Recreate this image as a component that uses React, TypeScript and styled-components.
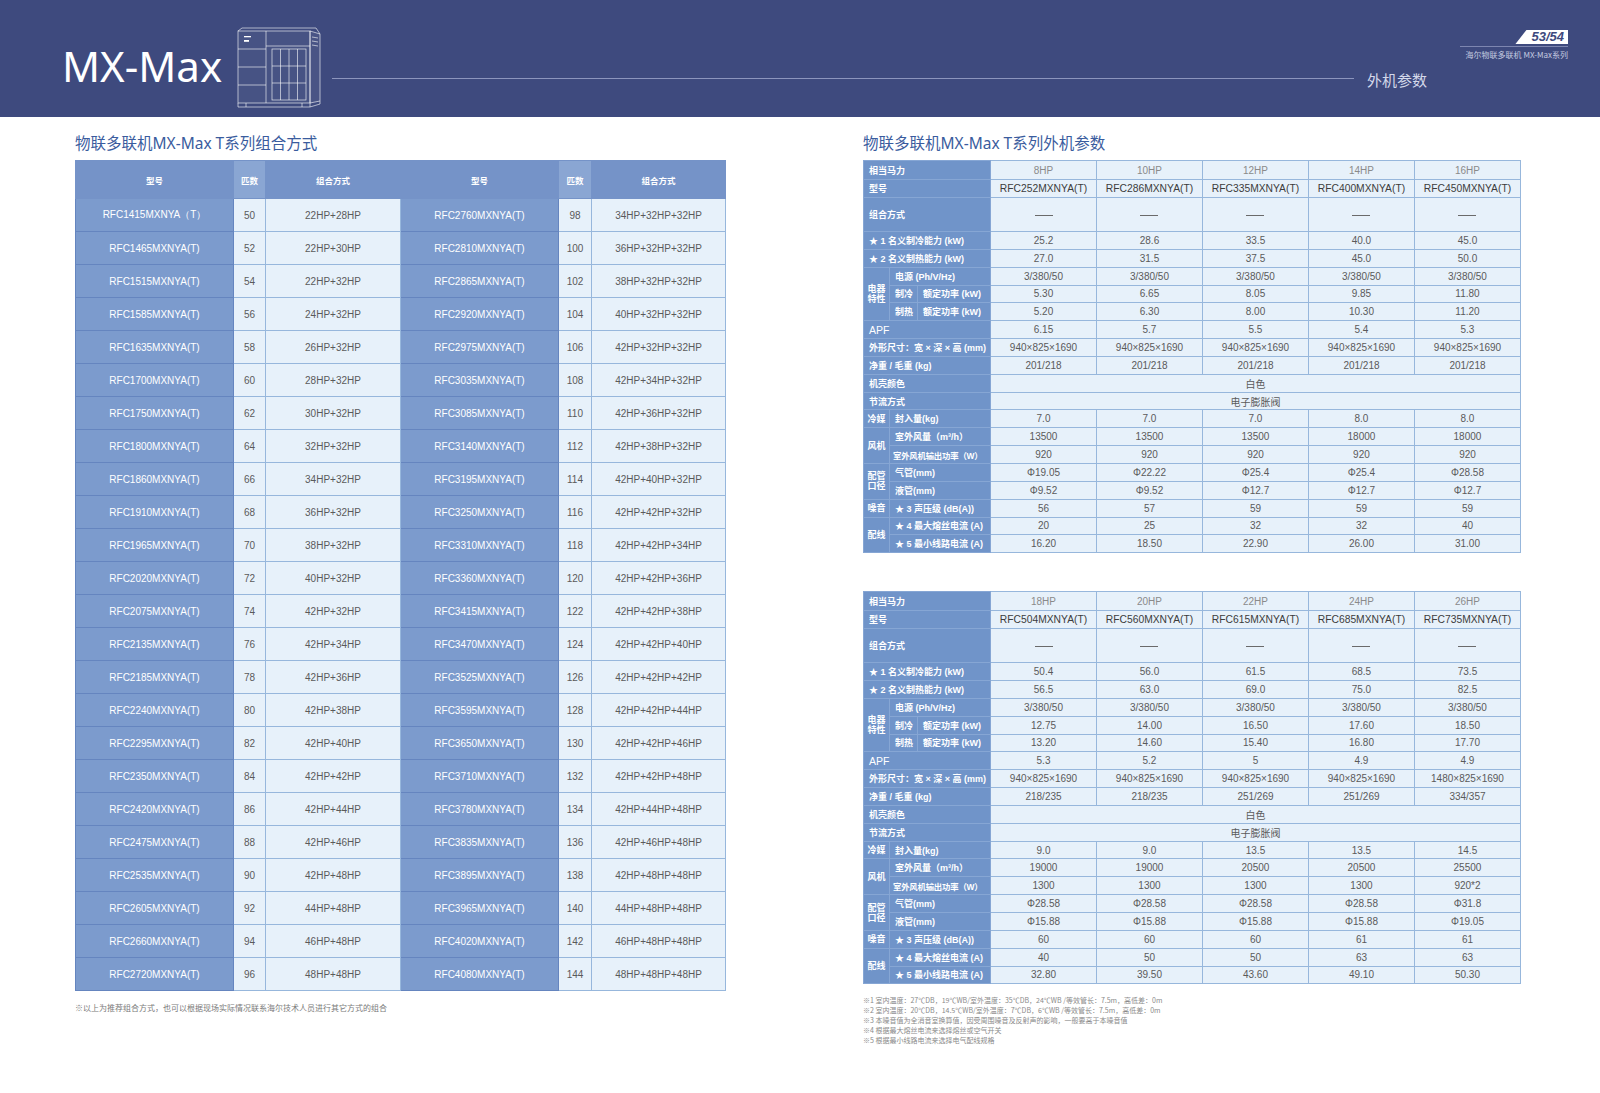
import React from "react";
import styled, { createGlobalStyle } from "styled-components";

const NAVY = "#3e4a7e";
const TITLE_BLUE = "#3a5c9e";
const LABEL_BLUE = "#7094c9";
const CELL_BG = "#e7f1fa";
const CELL_LINE = "#97b7dc";
const TEXT_GRAY = "#5a5a5a";

const GlobalStyle = createGlobalStyle`
  html, body {
    margin: 0;
    padding: 0;
    background: #fff;
  }
  body {
    font-family: "Liberation Sans", "Noto Sans CJK SC", sans-serif;
  }
`;

const Page = styled.div`
  width: 1600px;
  height: 1093px;
  background: #fff;
  overflow: hidden;
  display: flex;
  flex-direction: column;
`;

const Header = styled.header`
  height: 117px;
  flex-shrink: 0;
  box-sizing: border-box;
  background: ${NAVY};
  display: flex;
  align-items: flex-start;
  padding: 0 32px 0 62px;
`;

const Brand = styled.h1`
  margin: 44px 0 0;
  font-family: "Noto Sans", sans-serif;
  font-weight: 400;
  font-size: 42px;
  line-height: 44px;
  color: #fff;
  white-space: nowrap;
`;

const UnitPicture = styled.svg`
  flex-shrink: 0;
  margin: 27px 0 0 14px;
`;

const HeaderRule = styled.div`
  flex: 1;
  height: 1px;
  margin: 78px 0 0 10px;
  background: #8c95bd;
`;

const SectionLabel = styled.div`
  margin: 70px 0 0 13px;
  font-family: "Noto Sans CJK SC", sans-serif;
  font-size: 15px;
  line-height: 20px;
  color: #d3d8ea;
  white-space: nowrap;
`;

const Folio = styled.div`
  width: 108px;
  margin: 30px 0 0 33px;
  display: flex;
  flex-direction: column;
  align-items: flex-end;
`;

const FolioBadge = styled.div`
  height: 14px;
  line-height: 14px;
  padding: 0 4px 0 16px;
  background: #fff;
  color: ${NAVY};
  font-family: "Liberation Sans", sans-serif;
  font-weight: bold;
  font-style: italic;
  font-size: 13px;
  clip-path: polygon(11px 0, 100% 0, 100% 100%, 0 100%);
`;

const FolioRule = styled.div`
  align-self: stretch;
  height: 1px;
  margin-top: 2px;
  background: #7d86b0;
`;

const FolioCaption = styled.div`
  margin-top: 3px;
  font-family: "Noto Sans CJK SC", sans-serif;
  font-size: 8px;
  line-height: 10px;
  color: #c5cae0;
  white-space: nowrap;
`;

const Content = styled.main`
  display: flex;
  gap: 138px;
  padding: 16px 0 0 75px;
`;

const Column = styled.section<{ $width: number }>`
  width: ${(p) => p.$width}px;
  display: flex;
  flex-direction: column;
`;

const SectionTitle = styled.h2`
  margin: 0 0 7px;
  font-family: "Noto Sans", "Noto Sans CJK SC", sans-serif;
  font-weight: 400;
  font-size: 15.5px;
  line-height: 20px;
  color: ${TITLE_BLUE};
  white-space: nowrap;
`;

/* ---------- combination table ---------- */

const ComboTable = styled.table`
  width: 650px;
  border-collapse: collapse;
  table-layout: fixed;
  font-family: "Liberation Sans", sans-serif;
`;

const ComboHead = styled.th<{ $light?: boolean }>`
  height: 37px;
  padding: 0;
  background: ${(p) => (p.$light ? "#8aa6d3" : "#7593c8")};
  border: 1px solid #7593c8;
  color: #fff;
  font-family: "Noto Sans CJK SC", sans-serif;
  font-size: 8.5px;
  font-weight: bold;
`;

const ComboRow = styled.tr`
  height: 33px;
`;

const ModelCell = styled.td`
  padding: 0;
  background: #7c9bcd;
  border: 1px solid #6585bf;
  color: #fff;
  font-size: 10px;
  text-align: center;
`;

const ComboCell = styled.td`
  padding: 0;
  background: ${CELL_BG};
  border: 1px solid ${CELL_LINE};
  color: ${TEXT_GRAY};
  font-size: 10px;
  text-align: center;
`;

const Note = styled.p`
  margin: 11px 0 0;
  font-family: "Noto Sans CJK SC", sans-serif;
  font-size: 8px;
  line-height: 11px;
  color: #7a7a7a;
  white-space: nowrap;
`;

/* ---------- spec table ---------- */

const SpecTable = styled.table<{ $gap?: number }>`
  width: 658px;
  margin-top: ${(p) => p.$gap || 0}px;
  border-collapse: collapse;
  table-layout: fixed;
  border: 1px solid ${LABEL_BLUE};
  font-family: "Liberation Sans", "Noto Sans CJK SC", sans-serif;
`;

const SpecRow = styled.tr<{ $h?: number }>`
  height: ${(p) => p.$h || 17.85}px;
`;

const Label = styled.td<{ $big?: boolean; $tight?: boolean }>`
  padding: 0 0 0 ${(p) => (p.$tight ? 3 : 5)}px;
  background: ${LABEL_BLUE};
  border: 1px solid #86a6d4;
  color: #fff;
  font-size: ${(p) => (p.$big ? "10.5px" : p.$tight ? "8.4px" : "9px")};
  font-weight: ${(p) => (p.$big ? 400 : 700)};
  letter-spacing: ${(p) => (p.$tight ? "-0.2px" : "0")};
  white-space: nowrap;
  overflow: hidden;
`;

const Group = styled.td`
  padding: 0;
  background: ${LABEL_BLUE};
  border: 1px solid #86a6d4;
  color: #fff;
  font-size: 9px;
  font-weight: 700;
  line-height: 10px;
  text-align: center;
  word-break: break-all;
`;

const Value = styled.td<{ $tone?: "muted" | "strong" }>`
  padding: 0;
  background: ${CELL_BG};
  border: 1px solid ${CELL_LINE};
  color: ${(p) => (p.$tone === "muted" ? "#8a8a8a" : p.$tone === "strong" ? "#3c3c3c" : TEXT_GRAY)};
  font-size: ${(p) => (p.$tone === "strong" ? "10.3px" : "10px")};
  text-align: center;
  white-space: nowrap;
`;

const Dash = styled.span`
  display: inline-block;
  width: 18px;
  height: 1px;
  background: #6a6a6a;
  vertical-align: middle;
`;

const FootNotes = styled.div`
  margin-top: 11px;
  font-family: "Noto Sans CJK SC", sans-serif;
  font-size: 7px;
  line-height: 10px;
  color: #8a8a8a;
  white-space: nowrap;
`;

/* ---------- data ---------- */

const combos: [string, string, string][] = [
  ["RFC1415MXNYA（T）", "50", "22HP+28HP"],
  ["RFC1465MXNYA(T)", "52", "22HP+30HP"],
  ["RFC1515MXNYA(T)", "54", "22HP+32HP"],
  ["RFC1585MXNYA(T)", "56", "24HP+32HP"],
  ["RFC1635MXNYA(T)", "58", "26HP+32HP"],
  ["RFC1700MXNYA(T)", "60", "28HP+32HP"],
  ["RFC1750MXNYA(T)", "62", "30HP+32HP"],
  ["RFC1800MXNYA(T)", "64", "32HP+32HP"],
  ["RFC1860MXNYA(T)", "66", "34HP+32HP"],
  ["RFC1910MXNYA(T)", "68", "36HP+32HP"],
  ["RFC1965MXNYA(T)", "70", "38HP+32HP"],
  ["RFC2020MXNYA(T)", "72", "40HP+32HP"],
  ["RFC2075MXNYA(T)", "74", "42HP+32HP"],
  ["RFC2135MXNYA(T)", "76", "42HP+34HP"],
  ["RFC2185MXNYA(T)", "78", "42HP+36HP"],
  ["RFC2240MXNYA(T)", "80", "42HP+38HP"],
  ["RFC2295MXNYA(T)", "82", "42HP+40HP"],
  ["RFC2350MXNYA(T)", "84", "42HP+42HP"],
  ["RFC2420MXNYA(T)", "86", "42HP+44HP"],
  ["RFC2475MXNYA(T)", "88", "42HP+46HP"],
  ["RFC2535MXNYA(T)", "90", "42HP+48HP"],
  ["RFC2605MXNYA(T)", "92", "44HP+48HP"],
  ["RFC2660MXNYA(T)", "94", "46HP+48HP"],
  ["RFC2720MXNYA(T)", "96", "48HP+48HP"],
];

const combos3: [string, string, string][] = [
  ["RFC2760MXNYA(T)", "98", "34HP+32HP+32HP"],
  ["RFC2810MXNYA(T)", "100", "36HP+32HP+32HP"],
  ["RFC2865MXNYA(T)", "102", "38HP+32HP+32HP"],
  ["RFC2920MXNYA(T)", "104", "40HP+32HP+32HP"],
  ["RFC2975MXNYA(T)", "106", "42HP+32HP+32HP"],
  ["RFC3035MXNYA(T)", "108", "42HP+34HP+32HP"],
  ["RFC3085MXNYA(T)", "110", "42HP+36HP+32HP"],
  ["RFC3140MXNYA(T)", "112", "42HP+38HP+32HP"],
  ["RFC3195MXNYA(T)", "114", "42HP+40HP+32HP"],
  ["RFC3250MXNYA(T)", "116", "42HP+42HP+32HP"],
  ["RFC3310MXNYA(T)", "118", "42HP+42HP+34HP"],
  ["RFC3360MXNYA(T)", "120", "42HP+42HP+36HP"],
  ["RFC3415MXNYA(T)", "122", "42HP+42HP+38HP"],
  ["RFC3470MXNYA(T)", "124", "42HP+42HP+40HP"],
  ["RFC3525MXNYA(T)", "126", "42HP+42HP+42HP"],
  ["RFC3595MXNYA(T)", "128", "42HP+42HP+44HP"],
  ["RFC3650MXNYA(T)", "130", "42HP+42HP+46HP"],
  ["RFC3710MXNYA(T)", "132", "42HP+42HP+48HP"],
  ["RFC3780MXNYA(T)", "134", "42HP+44HP+48HP"],
  ["RFC3835MXNYA(T)", "136", "42HP+46HP+48HP"],
  ["RFC3895MXNYA(T)", "138", "42HP+48HP+48HP"],
  ["RFC3965MXNYA(T)", "140", "44HP+48HP+48HP"],
  ["RFC4020MXNYA(T)", "142", "46HP+48HP+48HP"],
  ["RFC4080MXNYA(T)", "144", "48HP+48HP+48HP"],
];

type Spec = Record<
  | "hp" | "model" | "cool" | "heat" | "coolPw" | "heatPw" | "apf" | "size" | "weight"
  | "charge" | "air" | "fanPw" | "gas" | "liquid" | "noise" | "fuse" | "mca",
  string[]
>;

const five = (v: string) => [v, v, v, v, v];

const specA: Spec = {
  hp: ["8HP", "10HP", "12HP", "14HP", "16HP"],
  model: ["RFC252MXNYA(T)", "RFC286MXNYA(T)", "RFC335MXNYA(T)", "RFC400MXNYA(T)", "RFC450MXNYA(T)"],
  cool: ["25.2", "28.6", "33.5", "40.0", "45.0"],
  heat: ["27.0", "31.5", "37.5", "45.0", "50.0"],
  coolPw: ["5.30", "6.65", "8.05", "9.85", "11.80"],
  heatPw: ["5.20", "6.30", "8.00", "10.30", "11.20"],
  apf: ["6.15", "5.7", "5.5", "5.4", "5.3"],
  size: five("940×825×1690"),
  weight: five("201/218"),
  charge: ["7.0", "7.0", "7.0", "8.0", "8.0"],
  air: ["13500", "13500", "13500", "18000", "18000"],
  fanPw: five("920"),
  gas: ["Φ19.05", "Φ22.22", "Φ25.4", "Φ25.4", "Φ28.58"],
  liquid: ["Φ9.52", "Φ9.52", "Φ12.7", "Φ12.7", "Φ12.7"],
  noise: ["56", "57", "59", "59", "59"],
  fuse: ["20", "25", "32", "32", "40"],
  mca: ["16.20", "18.50", "22.90", "26.00", "31.00"],
};

const specB: Spec = {
  hp: ["18HP", "20HP", "22HP", "24HP", "26HP"],
  model: ["RFC504MXNYA(T)", "RFC560MXNYA(T)", "RFC615MXNYA(T)", "RFC685MXNYA(T)", "RFC735MXNYA(T)"],
  cool: ["50.4", "56.0", "61.5", "68.5", "73.5"],
  heat: ["56.5", "63.0", "69.0", "75.0", "82.5"],
  coolPw: ["12.75", "14.00", "16.50", "17.60", "18.50"],
  heatPw: ["13.20", "14.60", "15.40", "16.80", "17.70"],
  apf: ["5.3", "5.2", "5", "4.9", "4.9"],
  size: ["940×825×1690", "940×825×1690", "940×825×1690", "940×825×1690", "1480×825×1690"],
  weight: ["218/235", "218/235", "251/269", "251/269", "334/357"],
  charge: ["9.0", "9.0", "13.5", "13.5", "14.5"],
  air: ["19000", "19000", "20500", "20500", "25500"],
  fanPw: ["1300", "1300", "1300", "1300", "920*2"],
  gas: ["Φ28.58", "Φ28.58", "Φ28.58", "Φ28.58", "Φ31.8"],
  liquid: ["Φ15.88", "Φ15.88", "Φ15.88", "Φ15.88", "Φ19.05"],
  noise: ["60", "60", "60", "61", "61"],
  fuse: ["40", "50", "50", "63", "63"],
  mca: ["32.80", "39.50", "43.60", "49.10", "50.30"],
};

const notes = [
  "※1 室内温度：27℃DB，19℃WB/室外温度：35℃DB，24℃WB /等效管长：7.5m，高低差：0m",
  "※2 室内温度：20℃DB，14.5℃WB/室外温度：7℃DB，6℃WB /等效管长：7.5m，高低差：0m",
  "※3 本噪音值为全消音室换算值，因受周围噪音及反射声的影响，一般要高于本噪音值",
  "※4 根据最大熔丝电流来选择熔丝或空气开关",
  "※5 根据最小线路电流来选择电气配线规格",
];

/* ---------- parts ---------- */

const OutdoorUnit = () => (
  <UnitPicture width="86" height="81" viewBox="0 0 86 81" fill="none" stroke="#fff" strokeWidth="0.7" strokeOpacity="0.85">
    <path d="M74 4 L84 7 L84 74 L74 76 Z" fill="rgba(255,255,255,0.06)" />
    <path d="M2 4 L6 1 L80 1 L84 7" />
    <rect x="2" y="4" width="72" height="72" fill="rgba(255,255,255,0.05)" />
    <line x1="30" y1="4" x2="30" y2="76" />
    <line x1="2" y1="22" x2="30" y2="22" />
    <line x1="2" y1="40" x2="30" y2="40" />
    <line x1="2" y1="58" x2="30" y2="58" />
    <line x1="30" y1="19" x2="74" y2="19" />
    <rect x="36" y="22" width="34" height="51" />
    <line x1="44.5" y1="22" x2="44.5" y2="73" />
    <line x1="53" y1="22" x2="53" y2="73" />
    <line x1="61.5" y1="22" x2="61.5" y2="73" />
    <line x1="36" y1="39" x2="70" y2="39" />
    <line x1="36" y1="56" x2="70" y2="56" />
    <line x1="76" y1="10" x2="82" y2="11" />
    <line x1="76" y1="14" x2="82" y2="15" />
    <line x1="76" y1="18" x2="82" y2="19" />
    <path d="M2 76 L2 80 L74 80 L74 76" />
    <path d="M74 80 L84 77 L84 74" />
    <line x1="10" y1="76" x2="10" y2="80" />
    <line x1="66" y1="76" x2="66" y2="80" />
    <rect x="8" y="9" width="7" height="1.3" fill="#fff" stroke="none" />
    <rect x="8" y="13" width="5" height="1.8" fill="#fff" stroke="none" />
  </UnitPicture>
);

const SpecSheet = ({ spec, gap }: { spec: Spec; gap?: number }) => {
  const cells = (values: string[], tone?: "muted" | "strong") =>
    values.map((v, i) => (
      <Value key={i} $tone={tone}>
        {v}
      </Value>
    ));

  return (
    <SpecTable $gap={gap}>
      <colgroup>
        <col style={{ width: 26 }} />
        <col style={{ width: 28 }} />
        <col style={{ width: 73 }} />
        {spec.hp.map((h) => (
          <col key={h} />
        ))}
      </colgroup>
      <tbody>
        <SpecRow $h={19}>
          <Label colSpan={3}>相当马力</Label>
          {cells(spec.hp, "muted")}
        </SpecRow>
        <SpecRow $h={18}>
          <Label colSpan={3}>型号</Label>
          {cells(spec.model, "strong")}
        </SpecRow>
        <SpecRow $h={34}>
          <Label colSpan={3}>组合方式</Label>
          {spec.hp.map((h) => (
            <Value key={h}>
              <Dash />
            </Value>
          ))}
        </SpecRow>
        <SpecRow>
          <Label colSpan={3}>★ 1 名义制冷能力 (kW)</Label>
          {cells(spec.cool)}
        </SpecRow>
        <SpecRow>
          <Label colSpan={3}>★ 2 名义制热能力 (kW)</Label>
          {cells(spec.heat)}
        </SpecRow>
        <SpecRow>
          <Group rowSpan={3}>电器特性</Group>
          <Label colSpan={2}>电源 (Ph/V/Hz)</Label>
          {cells(five("3/380/50"))}
        </SpecRow>
        <SpecRow>
          <Label>制冷</Label>
          <Label>额定功率 (kW)</Label>
          {cells(spec.coolPw)}
        </SpecRow>
        <SpecRow>
          <Label>制热</Label>
          <Label>额定功率 (kW)</Label>
          {cells(spec.heatPw)}
        </SpecRow>
        <SpecRow>
          <Label colSpan={3} $big>
            APF
          </Label>
          {cells(spec.apf)}
        </SpecRow>
        <SpecRow>
          <Label colSpan={3}>外形尺寸：宽 × 深 × 高 (mm)</Label>
          {cells(spec.size)}
        </SpecRow>
        <SpecRow>
          <Label colSpan={3}>净重 / 毛重 (kg)</Label>
          {cells(spec.weight)}
        </SpecRow>
        <SpecRow>
          <Label colSpan={3}>机壳颜色</Label>
          <Value colSpan={5}>白色</Value>
        </SpecRow>
        <SpecRow>
          <Label colSpan={3}>节流方式</Label>
          <Value colSpan={5}>电子膨胀阀</Value>
        </SpecRow>
        <SpecRow>
          <Group>冷媒</Group>
          <Label colSpan={2}>封入量(kg)</Label>
          {cells(spec.charge)}
        </SpecRow>
        <SpecRow>
          <Group rowSpan={2}>风机</Group>
          <Label colSpan={2}>室外风量（m³/h）</Label>
          {cells(spec.air)}
        </SpecRow>
        <SpecRow>
          <Label colSpan={2} $tight>
            室外风机输出功率（W）
          </Label>
          {cells(spec.fanPw)}
        </SpecRow>
        <SpecRow>
          <Group rowSpan={2}>配管口径</Group>
          <Label colSpan={2}>气管(mm)</Label>
          {cells(spec.gas)}
        </SpecRow>
        <SpecRow>
          <Label colSpan={2}>液管(mm)</Label>
          {cells(spec.liquid)}
        </SpecRow>
        <SpecRow>
          <Group>噪音</Group>
          <Label colSpan={2}>★ 3 声压级 (dB(A))</Label>
          {cells(spec.noise)}
        </SpecRow>
        <SpecRow>
          <Group rowSpan={2}>配线</Group>
          <Label colSpan={2}>★ 4 最大熔丝电流 (A)</Label>
          {cells(spec.fuse)}
        </SpecRow>
        <SpecRow>
          <Label colSpan={2}>★ 5 最小线路电流 (A)</Label>
          {cells(spec.mca)}
        </SpecRow>
      </tbody>
    </SpecTable>
  );
};

const App: React.FunctionComponent = () => (
  <>
    <GlobalStyle />
    <Page>
      <Header>
        <Brand>MX-Max</Brand>
        <OutdoorUnit />
        <HeaderRule />
        <SectionLabel>外机参数</SectionLabel>
        <Folio>
          <FolioBadge>53/54</FolioBadge>
          <FolioRule />
          <FolioCaption>海尔物联多联机 MX-Max系列</FolioCaption>
        </Folio>
      </Header>

      <Content>
        <Column $width={650}>
          <SectionTitle>物联多联机MX-Max T系列组合方式</SectionTitle>
          <ComboTable>
            <colgroup>
              <col style={{ width: 158 }} />
              <col style={{ width: 32 }} />
              <col style={{ width: 135 }} />
              <col style={{ width: 158 }} />
              <col style={{ width: 33 }} />
              <col style={{ width: 134 }} />
            </colgroup>
            <thead>
              <tr>
                <ComboHead>型号</ComboHead>
                <ComboHead $light>匹数</ComboHead>
                <ComboHead>组合方式</ComboHead>
                <ComboHead>型号</ComboHead>
                <ComboHead $light>匹数</ComboHead>
                <ComboHead>组合方式</ComboHead>
              </tr>
            </thead>
            <tbody>
              {combos.map((row, i) => (
                <ComboRow key={row[0]}>
                  <ModelCell>{row[0]}</ModelCell>
                  <ComboCell>{row[1]}</ComboCell>
                  <ComboCell>{row[2]}</ComboCell>
                  <ModelCell>{combos3[i][0]}</ModelCell>
                  <ComboCell>{combos3[i][1]}</ComboCell>
                  <ComboCell>{combos3[i][2]}</ComboCell>
                </ComboRow>
              ))}
            </tbody>
          </ComboTable>
          <Note>※以上为推荐组合方式，也可以根据现场实际情况联系海尔技术人员进行其它方式的组合</Note>
        </Column>

        <Column $width={658}>
          <SectionTitle>物联多联机MX-Max T系列外机参数</SectionTitle>
          <SpecSheet spec={specA} />
          <SpecSheet spec={specB} gap={38} />
          <FootNotes>
            {notes.map((n) => (
              <div key={n}>{n}</div>
            ))}
          </FootNotes>
        </Column>
      </Content>
    </Page>
  </>
);

export default App;
